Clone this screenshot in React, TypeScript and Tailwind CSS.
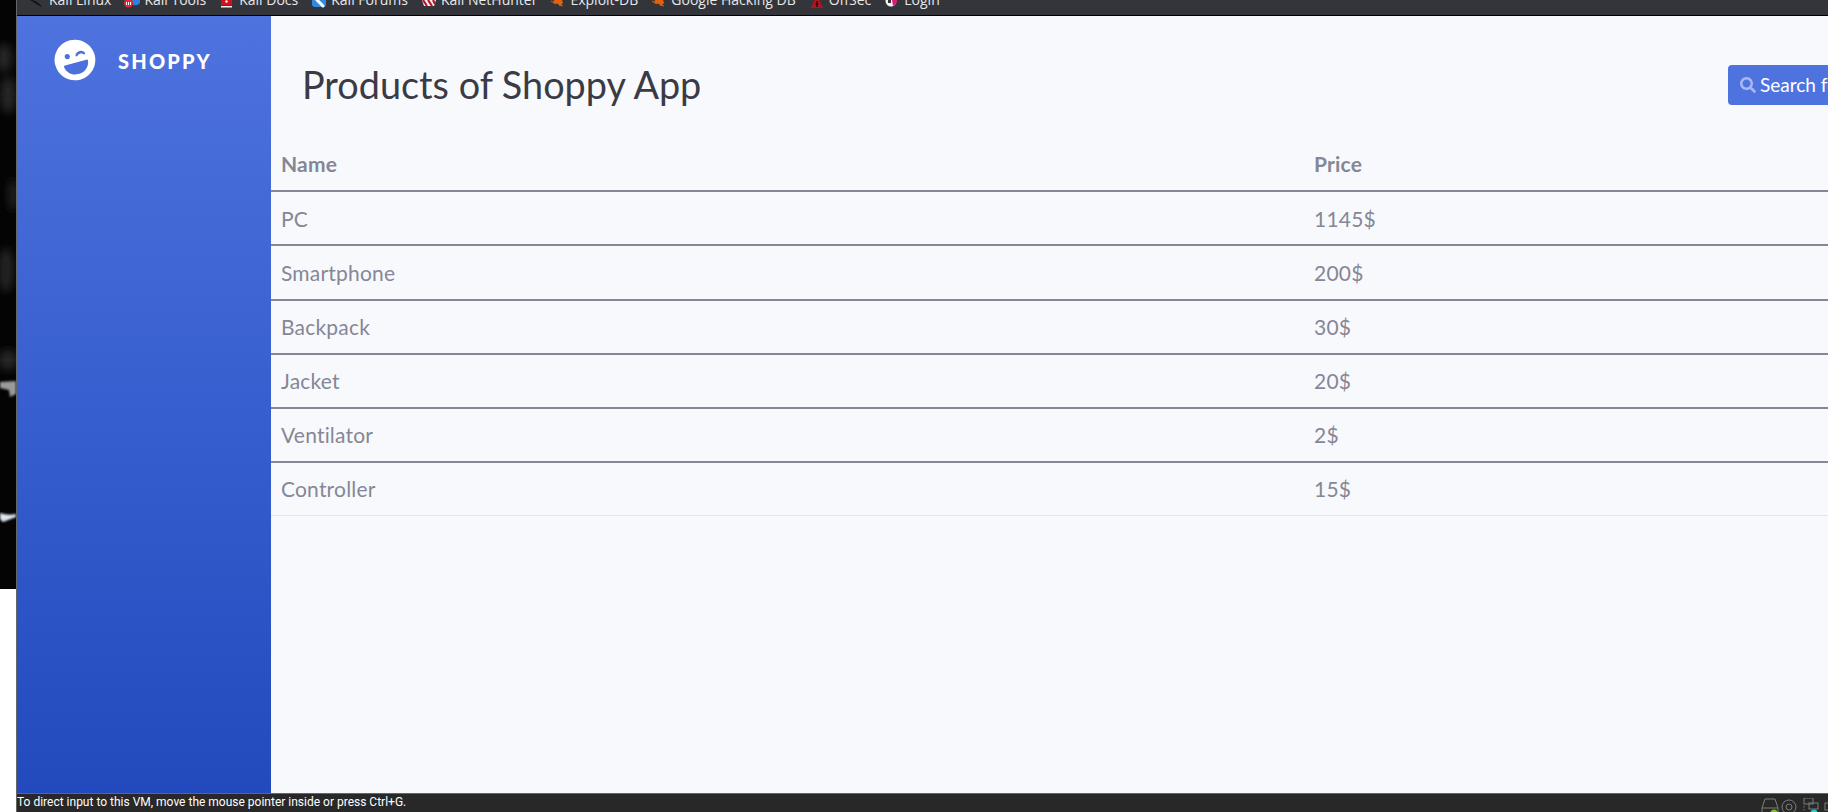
import type { ReactNode } from "react"
import { FaLaughWink, FaSearch } from "react-icons/fa"

// visible part of the bookmark icons, the top half is cut by the window edge
const icons: Record<string, ReactNode> = {
  linux: <path d="M1 0 Q6 0 9 3 Q12 5 13 7 Q9 5 6 3 Q3 1 1 0 Z" fill="#0d0d0d" />,
  tools: (
    <>
      <path d="M8 0 H16 V3 Q14 6 9 5 Z" fill="#2f7fe0" />
      <circle cx="4.5" cy="3" r="4.5" fill="#e8252f" />
      <path d="M2.5 5 V2 M4.5 5 V2 M6.5 5 V2" stroke="#fff" strokeWidth="1" />
    </>
  ),
  docs: (
    <>
      <rect x="2" y="0" width="11" height="5.5" fill="#d5101c" />
      <rect x="2" y="6" width="11" height="1.5" fill="#f0f0f0" />
      <circle cx="7.5" cy="1.5" r="1.2" fill="#fff" />
    </>
  ),
  forums: (
    <>
      <path d="M1 0 H15 V4 Q15 7 12 7 H4 Q1 7 1 4 Z" fill="#2f8ae0" />
      <path d="M6 0 L12 6" stroke="#fff" strokeWidth="3" strokeLinecap="round" />
    </>
  ),
  nethunter: (
    <>
      <path d="M1 0 H15 L13 6 H3 Z" fill="#f4f0f0" />
      <path d="M2 0 L6 6 M7 0 L11 6 M12 0 L14 4" stroke="#b8162e" strokeWidth="2.2" />
    </>
  ),
  spider: (
    <>
      <path d="M4 0 L12 0 L13 3 L10 6 L8 4 L3 3 Z" fill="#e2600f" />
      <path d="M1 1 L6 4 M9 5 L13 6" stroke="#e2600f" strokeWidth="1" />
    </>
  ),
  offsec: (
    <>
      <path d="M5.5 0 H10.5 L14 8 H2 Z" fill="#b5121b" />
      <path d="M8 1 V7 M6.5 4 H9.5" stroke="#1a0a0a" strokeWidth="1.2" />
    </>
  ),
  login: (
    <>
      <circle cx="7" cy="1" r="5.5" fill="#f2f2f2" />
      <path d="M8 0 H13 Q13 4 9 6 Z" fill="#d81b75" />
      <path d="M4 0 H7 V3 H4 Z" fill="#333" />
    </>
  ),
}

const bookmarks = [
  { label: "Kali Linux", icon: "linux" },
  { label: "Kali Tools", icon: "tools" },
  { label: "Kali Docs", icon: "docs" },
  { label: "Kali Forums", icon: "forums" },
  { label: "Kali NetHunter", icon: "nethunter" },
  { label: "Exploit-DB", icon: "spider" },
  { label: "Google Hacking DB", icon: "spider" },
  { label: "OffSec", icon: "offsec" },
  { label: "Login", icon: "login" },
]

const products = [
  { name: "PC", price: "1145$" },
  { name: "Smartphone", price: "200$" },
  { name: "Backpack", price: "30$" },
  { name: "Jacket", price: "20$" },
  { name: "Ventilator", price: "2$" },
  { name: "Controller", price: "15$" },
]

function Wallpaper() {
  return (
    <svg viewBox="0 0 16 589" className="h-[589px] w-4 bg-[#040404]">
      <defs>
        <filter id="soft">
          <feGaussianBlur stdDeviation="1" />
        </filter>
        <filter id="softer">
          <feGaussianBlur stdDeviation="4" />
        </filter>
      </defs>
      <g filter="url(#softer)" fill="#262626">
        <ellipse cx="4" cy="58" rx="8" ry="14" />
        <ellipse cx="8" cy="95" rx="8" ry="18" />
        <ellipse cx="13" cy="195" rx="4" ry="16" />
        <ellipse cx="6" cy="270" rx="7" ry="22" />
        <ellipse cx="8" cy="360" rx="10" ry="10" />
      </g>
      <path d="M0 382 L16 381 L16 394 L10 397 L9 390 L0 388 Z" fill="#9a9a9a" filter="url(#soft)" />
      <path d="M0 513 Q8 516 16 514 L16 517 Q8 520 3 522 L0 519 Z" fill="#dfe6f0" filter="url(#soft)" />
    </svg>
  )
}

function VmStatusIcons() {
  return (
    <div className="flex items-start pt-[4px]">
      <svg viewBox="0 0 68 19" className="h-[19px] w-[68px]" fill="none" stroke="#7c7c7c">
        <path d="M2 10 L5 1 H15 L18 10 V15 H2 Z M2 10 H18" />
        <circle cx="14" cy="15" r="3.5" fill="#7fc41a" stroke="none" />
        <circle cx="29" cy="9" r="7" />
        <circle cx="29" cy="9" r="3" />
        <rect x="44" y="0" width="9" height="6" />
        <rect x="49" y="5" width="9" height="6" />
        <path d="M44 8 V15 H50" strokeDasharray="1.5 1.5" />
        <circle cx="54" cy="15" r="3.5" fill="#22d3c5" stroke="none" />
        <rect x="65" y="5" width="5" height="7" />
      </svg>
    </div>
  )
}

export default function App() {
  return (
    <div className="flex h-[812px] w-[1828px] overflow-hidden bg-white font-['Lato',sans-serif]">
      <div className="flex w-4 shrink-0 flex-col">
        <Wallpaper />
      </div>
      <div className="flex min-w-0 flex-1 flex-col border-l border-[#666]">
        <div className="flex h-[16px] shrink-0 items-end gap-[13px] overflow-hidden border-b border-black bg-[#33353b] pl-[12px] font-['Open_Sans',sans-serif] text-[14px] leading-[20px] text-[#e8e8e8]">
          {bookmarks.map((b) => (
            <div key={b.label} className="flex shrink-0 items-center gap-[4px] pb-[5px]">
              <svg viewBox="0 -8 16 16" className="h-4 w-4">
                {icons[b.icon]}
              </svg>
              <span>{b.label}</span>
            </div>
          ))}
        </div>
        <div className="flex min-h-0 flex-1">
          <aside className="w-[254px] shrink-0 bg-gradient-to-b from-[#4e73df] to-[#224abe]">
            <div className="flex items-center pl-[37px] pt-[23px]">
              <FaLaughWink className="h-[42px] w-[42px] -rotate-[15deg] text-white" />
              <span className="ml-[22px] mt-[2px] text-[20px] leading-[40px] font-black tracking-[2.2px] text-white">SHOPPY</span>
            </div>
          </aside>
          <main className="min-w-0 flex-1 bg-[#f8f9fc]">
            <div className="flex h-[121px] items-center justify-between pl-[31px] pt-[49px] pb-[32px]">
              <h1 className="text-[37.8px] font-normal text-[#3a3b45]">Products of Shoppy App</h1>
              <button className="flex h-[40px] w-[100px] items-center gap-[4px] overflow-hidden whitespace-nowrap rounded-l-[4px] bg-[#4e73df] pl-[12px] text-[19px] text-white">
                <FaSearch className="h-[16px] w-[16px] shrink-0 text-[#a7b9ef]" />
                Search for
              </button>
            </div>
            <table className="w-full table-fixed border-collapse text-left text-[21px] tracking-[0.2px] text-[#858796]">
              <thead>
                <tr className="h-[54.2px] border-b-2 border-[#858796]">
                  <th className="w-[1033px] px-[10px] font-bold">Name</th>
                  <th className="px-[10px] font-bold">Price</th>
                </tr>
              </thead>
              <tbody>
                {products.map((p, i) => (
                  <tr
                    key={p.name}
                    className={
                      i === products.length - 1
                        ? "h-[53px] border-b border-[#e3e6f0]"
                        : "h-[54.2px] border-b-2 border-[#858796]"
                    }
                  >
                    <td className="px-[10px]">{p.name}</td>
                    <td className="px-[10px]">{p.price}</td>
                  </tr>
                ))}
              </tbody>
            </table>
          </main>
        </div>
        <div className="flex h-[19px] shrink-0 justify-between overflow-hidden border-t border-[#666] bg-[#282828] font-['Roboto',sans-serif] text-[12px] leading-[17px] text-white">
          <span>To direct input to this VM, move the mouse pointer inside or press Ctrl+G.</span>
          <VmStatusIcons />
        </div>
      </div>
    </div>
  )
}
